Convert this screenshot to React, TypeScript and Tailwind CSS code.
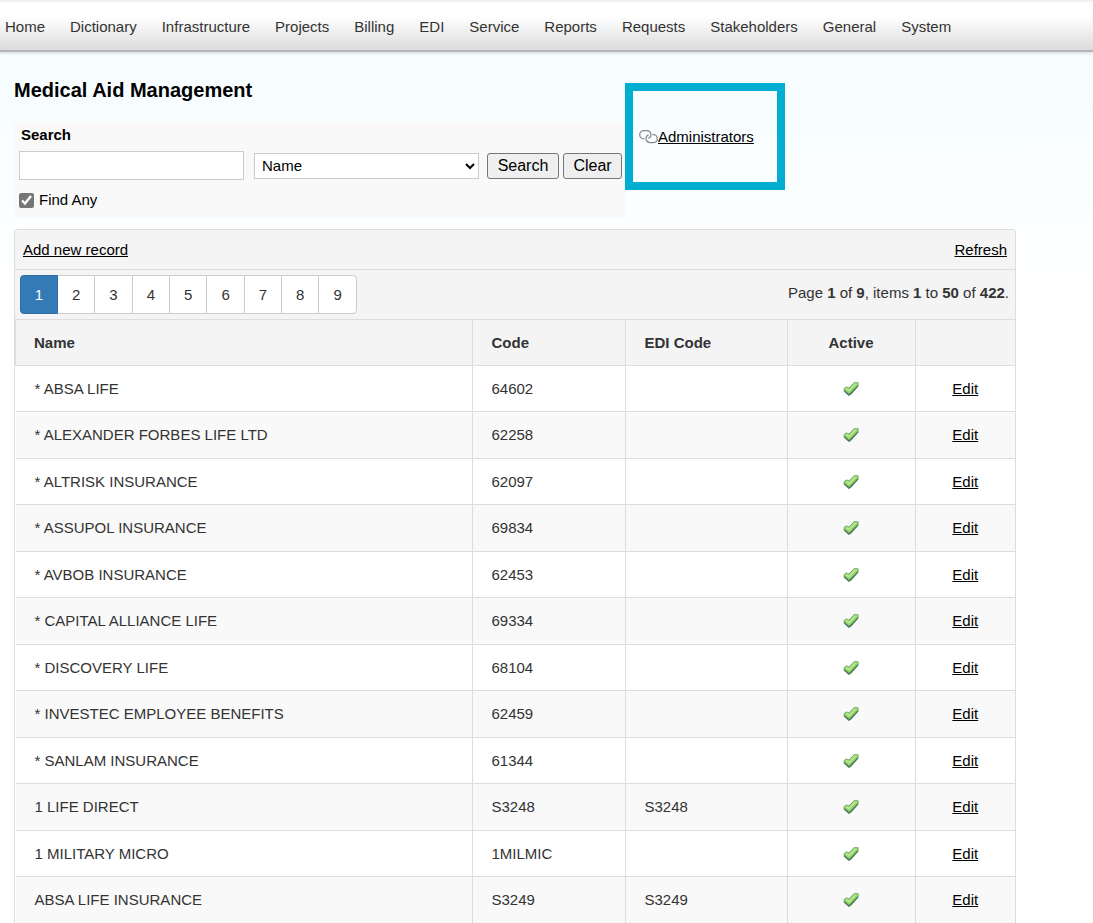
type TRecord = {
  name: string
  code: string
  ediCode?: string
}

const MENU_ITEMS = [
  'Home',
  'Dictionary',
  'Infrastructure',
  'Projects',
  'Billing',
  'EDI',
  'Service',
  'Reports',
  'Requests',
  'Stakeholders',
  'General',
  'System',
]

const PAGES = [1, 2, 3, 4, 5, 6, 7, 8, 9]

const RECORDS: TRecord[] = [
  { name: '* ABSA LIFE', code: '64602' },
  { name: '* ALEXANDER FORBES LIFE LTD', code: '62258' },
  { name: '* ALTRISK INSURANCE', code: '62097' },
  { name: '* ASSUPOL INSURANCE', code: '69834' },
  { name: '* AVBOB INSURANCE', code: '62453' },
  { name: '* CAPITAL ALLIANCE LIFE', code: '69334' },
  { name: '* DISCOVERY LIFE', code: '68104' },
  { name: '* INVESTEC EMPLOYEE BENEFITS', code: '62459' },
  { name: '* SANLAM INSURANCE', code: '61344' },
  { name: '1 LIFE DIRECT', code: 'S3248', ediCode: 'S3248' },
  { name: '1 MILITARY MICRO', code: '1MILMIC' },
  { name: 'ABSA LIFE INSURANCE', code: 'S3249', ediCode: 'S3249' },
]

function TickIcon() {
  return (
    <svg viewBox="0 0 16 16" className="mx-auto size-4" role="img" aria-label="Active">
      <path d="M0.8 7.4 3.4 5.6 6 6.8 11.2 1.2 15.4 1.4V5.4L8 13.8 5.8 15 0.8 10.6Z" fill="#4d7f56" />
      <path d="M1.2 7.6 3.4 6 6.2 7.4 11.5 1.6 15 1.8V3.8L6.2 12.8 1.2 8.8Z" fill="#9ad96c" stroke="#86b97a" strokeWidth="0.6" />
      <path d="M3.2 7.4 6.2 9.4 12.4 2.8" fill="none" stroke="#b5e98a" strokeWidth="1.8" />
    </svg>
  )
}

function LinkIcon() {
  return (
    <svg viewBox="0 0 19 14" className="h-[14px] w-[19px] shrink-0" fill="none" stroke="#8b8b8b" strokeWidth="1.3" aria-hidden="true">
      <path d="M5.4 8.7H4.7A4 4 0 0 1 4.7 0.7H8A4 4 0 0 1 9.4 8.4" />
      <path d="M13.4 4.6H14.3A4 4 0 0 1 14.3 12.6H11A4 4 0 0 1 9.6 4.9" />
    </svg>
  )
}

function Menu() {
  return (
    <nav className="flex h-[52px] items-center gap-[25px] border-t-2 border-b-2 border-t-[#f0f0f0] border-b-[#b6b6ba] bg-linear-to-b from-white from-30% to-[#dcdcdc] pt-px pl-[5px] text-[#333] shadow-[0_1px_3px_rgba(0,0,0,0.15)]">
      {MENU_ITEMS.map((item) => (
        <a key={item} href="#">
          {item}
        </a>
      ))}
    </nav>
  )
}

function SearchPanel() {
  return (
    <form className="mt-5 bg-[#f9f9f9] pt-[3px] pr-[3px] pb-[7px] pl-[5px]">
      <label htmlFor="search" className="block pl-[2px] font-bold">
        Search
      </label>
      <div className="mt-[6px] flex items-center">
        <input id="search" type="text" className="h-[29px] min-w-0 flex-1 border border-[#ccc] bg-white px-2" />
        <select aria-label="Search field" className="ml-[10px] h-[26px] w-[225px] border border-[#ccc] bg-white pl-[3px]">
          <option>Name</option>
        </select>
        <button type="button" className="ml-2 h-[26px] w-[72px] rounded-[3px] border border-[#767676] bg-[#efefef] text-base leading-6">
          Search
        </button>
        <button type="button" className="ml-1 h-[26px] w-[59px] rounded-[3px] border border-[#767676] bg-[#efefef] text-base leading-6">
          Clear
        </button>
      </div>
      <label className="mt-[10px] flex items-center gap-[5px]">
        <input type="checkbox" defaultChecked className="size-[15px] accent-[#767676]" />
        Find Any
      </label>
    </form>
  )
}

function Pager() {
  return (
    <div className="flex h-[50px] items-center justify-between border-b border-[#ddd] pr-[6px] pl-[5px]">
      <div className="flex rounded border border-[#ccc] bg-white">
        {PAGES.map((page) => (
          <button
            key={page}
            type="button"
            className={
              page === 1
                ? '-my-px -ml-px h-[39px] w-[38px] rounded-l border border-[#2e6da4] bg-[#337ab7] text-white'
                : 'h-[37px] flex-none border-[#ccc] px-[14px] not-last:border-r'
            }
          >
            {page}
          </button>
        ))}
      </div>
      <p className="pb-1">
        Page <b>1</b> of <b>9</b>, items <b>1</b> to <b>50</b> of <b>422</b>.
      </p>
    </div>
  )
}

function RecordTable() {
  return (
    <table className="w-full table-fixed border-collapse [&_td]:pt-px [&_th]:pt-px">
      <colgroup>
        <col />
        <col className="w-[153px]" />
        <col className="w-[162px]" />
        <col className="w-[128px]" />
        <col className="w-[100px]" />
      </colgroup>
      <thead>
        <tr className="h-[45px] border-b border-[#ddd] bg-[#f4f4f4] text-left">
          <th className="border-r border-l border-[#ddd] pl-[18px]">Name</th>
          <th className="border-r border-[#ddd] pl-[19px]">Code</th>
          <th className="border-r border-[#ddd] pl-[19px]">EDI Code</th>
          <th className="border-r border-[#ddd] text-center">Active</th>
          <td />
        </tr>
      </thead>
      <tbody>
        {RECORDS.map((record) => (
          <tr key={record.name} className="border-b border-[#ddd] odd:h-[46px] even:h-[47px] even:bg-[#f9f9f9]">
            <td className="border-r border-[#ddd] pl-[19px]">{record.name}</td>
            <td className="border-r border-[#ddd] pl-[19px]">{record.code}</td>
            <td className="border-r border-[#ddd] pl-[19px]">{record.ediCode}</td>
            <td className="border-r border-[#ddd]">
              <TickIcon />
            </td>
            <td className="text-center">
              <a href="#" className="text-black underline">
                Edit
              </a>
            </td>
          </tr>
        ))}
      </tbody>
    </table>
  )
}

export default function App() {
  return (
    <div className="bg-white bg-linear-to-b from-[#f7fdff] from-[100px] to-white to-[300px] font-['Liberation_Sans',Arial,sans-serif] text-[15px] leading-5 text-black">
      <Menu />
      <main className="pr-[77px] pl-[14px]">
        <div className="flex items-start pt-[26px]">
          <div className="w-[611px]">
            <h1 className="text-xl leading-6 font-bold">Medical Aid Management</h1>
            <SearchPanel />
          </div>
          <div className="mt-[5px] flex h-[107px] w-[160px] items-center border-8 border-[#00aed1] pl-[6px]">
            <LinkIcon />
            <a href="#" className="underline">
              Administrators
            </a>
          </div>
        </div>
        <section className="mt-3 rounded-t border border-b-0 border-[#ddd] bg-white text-[#333]">
          <div className="rounded-t bg-[#f4f4f4]">
            <div className="flex h-10 items-center justify-between border-b border-[#ddd] px-2 text-black">
              <a href="#" className="underline">
                Add new record
              </a>
              <a href="#" className="underline">
                Refresh
              </a>
            </div>
            <Pager />
          </div>
          <RecordTable />
        </section>
      </main>
    </div>
  )
}
